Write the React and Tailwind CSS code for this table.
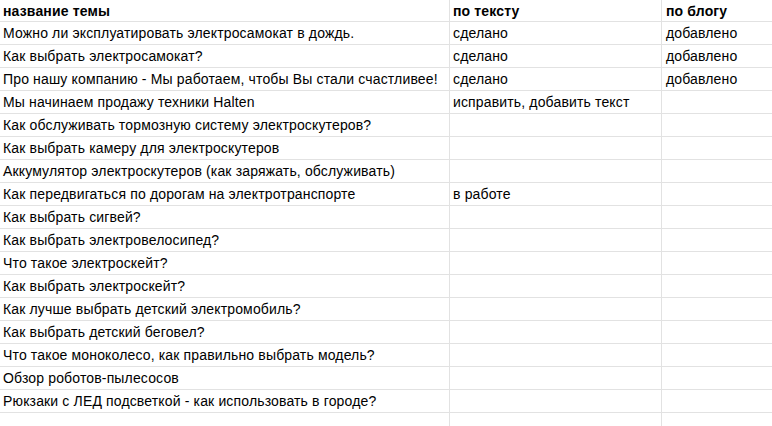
import React from 'react';

const rows = [
  ['Можно ли эксплуатировать электросамокат в дождь.', 'сделано', 'добавлено'],
  ['Как выбрать электросамокат?', 'сделано', 'добавлено'],
  ['Про нашу компанию - Мы работаем, чтобы Вы стали счастливее!', 'сделано', 'добавлено'],
  ['Мы начинаем продажу техники Halten', 'исправить, добавить текст', ''],
  ['Как обслуживать тормозную систему электроскутеров?', '', ''],
  ['Как выбрать камеру для электроскутеров', '', ''],
  ['Аккумулятор электроскутеров (как заряжать, обслуживать)', '', ''],
  ['Как передвигаться по дорогам на электротранспорте', 'в работе', ''],
  ['Как выбрать сигвей?', '', ''],
  ['Как выбрать электровелосипед?', '', ''],
  ['Что такое электроскейт?', '', ''],
  ['Как выбрать электроскейт?', '', ''],
  ['Как лучше выбрать детский электромобиль?', '', ''],
  ['Как выбрать детский беговел?', '', ''],
  ['Что такое моноколесо, как правильно выбрать модель?', '', ''],
  ['Обзор роботов-пылесосов', '', ''],
  ['Рюкзаки с ЛЕД подсветкой - как использовать в городе?', '', ''],
  ['', '', ''],
];

const Row = ({ cells, header, last }) => (
  <div className={`flex ${header ? 'h-[22px]' : 'h-[23px]'} ${last ? '' : 'border-b border-[#e2e2e2]'}`}>
    <div className={`w-[450px] shrink-0 border-r border-[#e2e2e2] px-[3px] flex items-end ${header ? 'pb-[2px]' : 'pb-[3px]'} whitespace-nowrap overflow-hidden`}>
      {cells[0]}
    </div>
    <div className={`w-[212px] shrink-0 border-r border-[#e2e2e2] px-[3px] flex items-end ${header ? 'pb-[2px]' : 'pb-[3px]'} whitespace-nowrap overflow-hidden`}>
      {cells[1]}
    </div>
    <div className={`flex-1 px-[4px] flex items-end ${header ? 'pb-[2px]' : 'pb-[3px]'} whitespace-nowrap overflow-hidden`}>
      {cells[2]}
    </div>
  </div>
);

export default function App() {
  return (
    <div className="w-[772px] h-[426px] overflow-hidden bg-white text-black text-[14px] leading-[16px] tracking-[0.15px] font-['Liberation_Sans',Arial,sans-serif]">
      <div className="font-bold">
        <Row header cells={['название темы', 'по тексту', 'по блогу']} />
      </div>
      {rows.map((r, i) => (
        <Row key={i} cells={r} last={i === rows.length - 1} />
      ))}
    </div>
  );
}
